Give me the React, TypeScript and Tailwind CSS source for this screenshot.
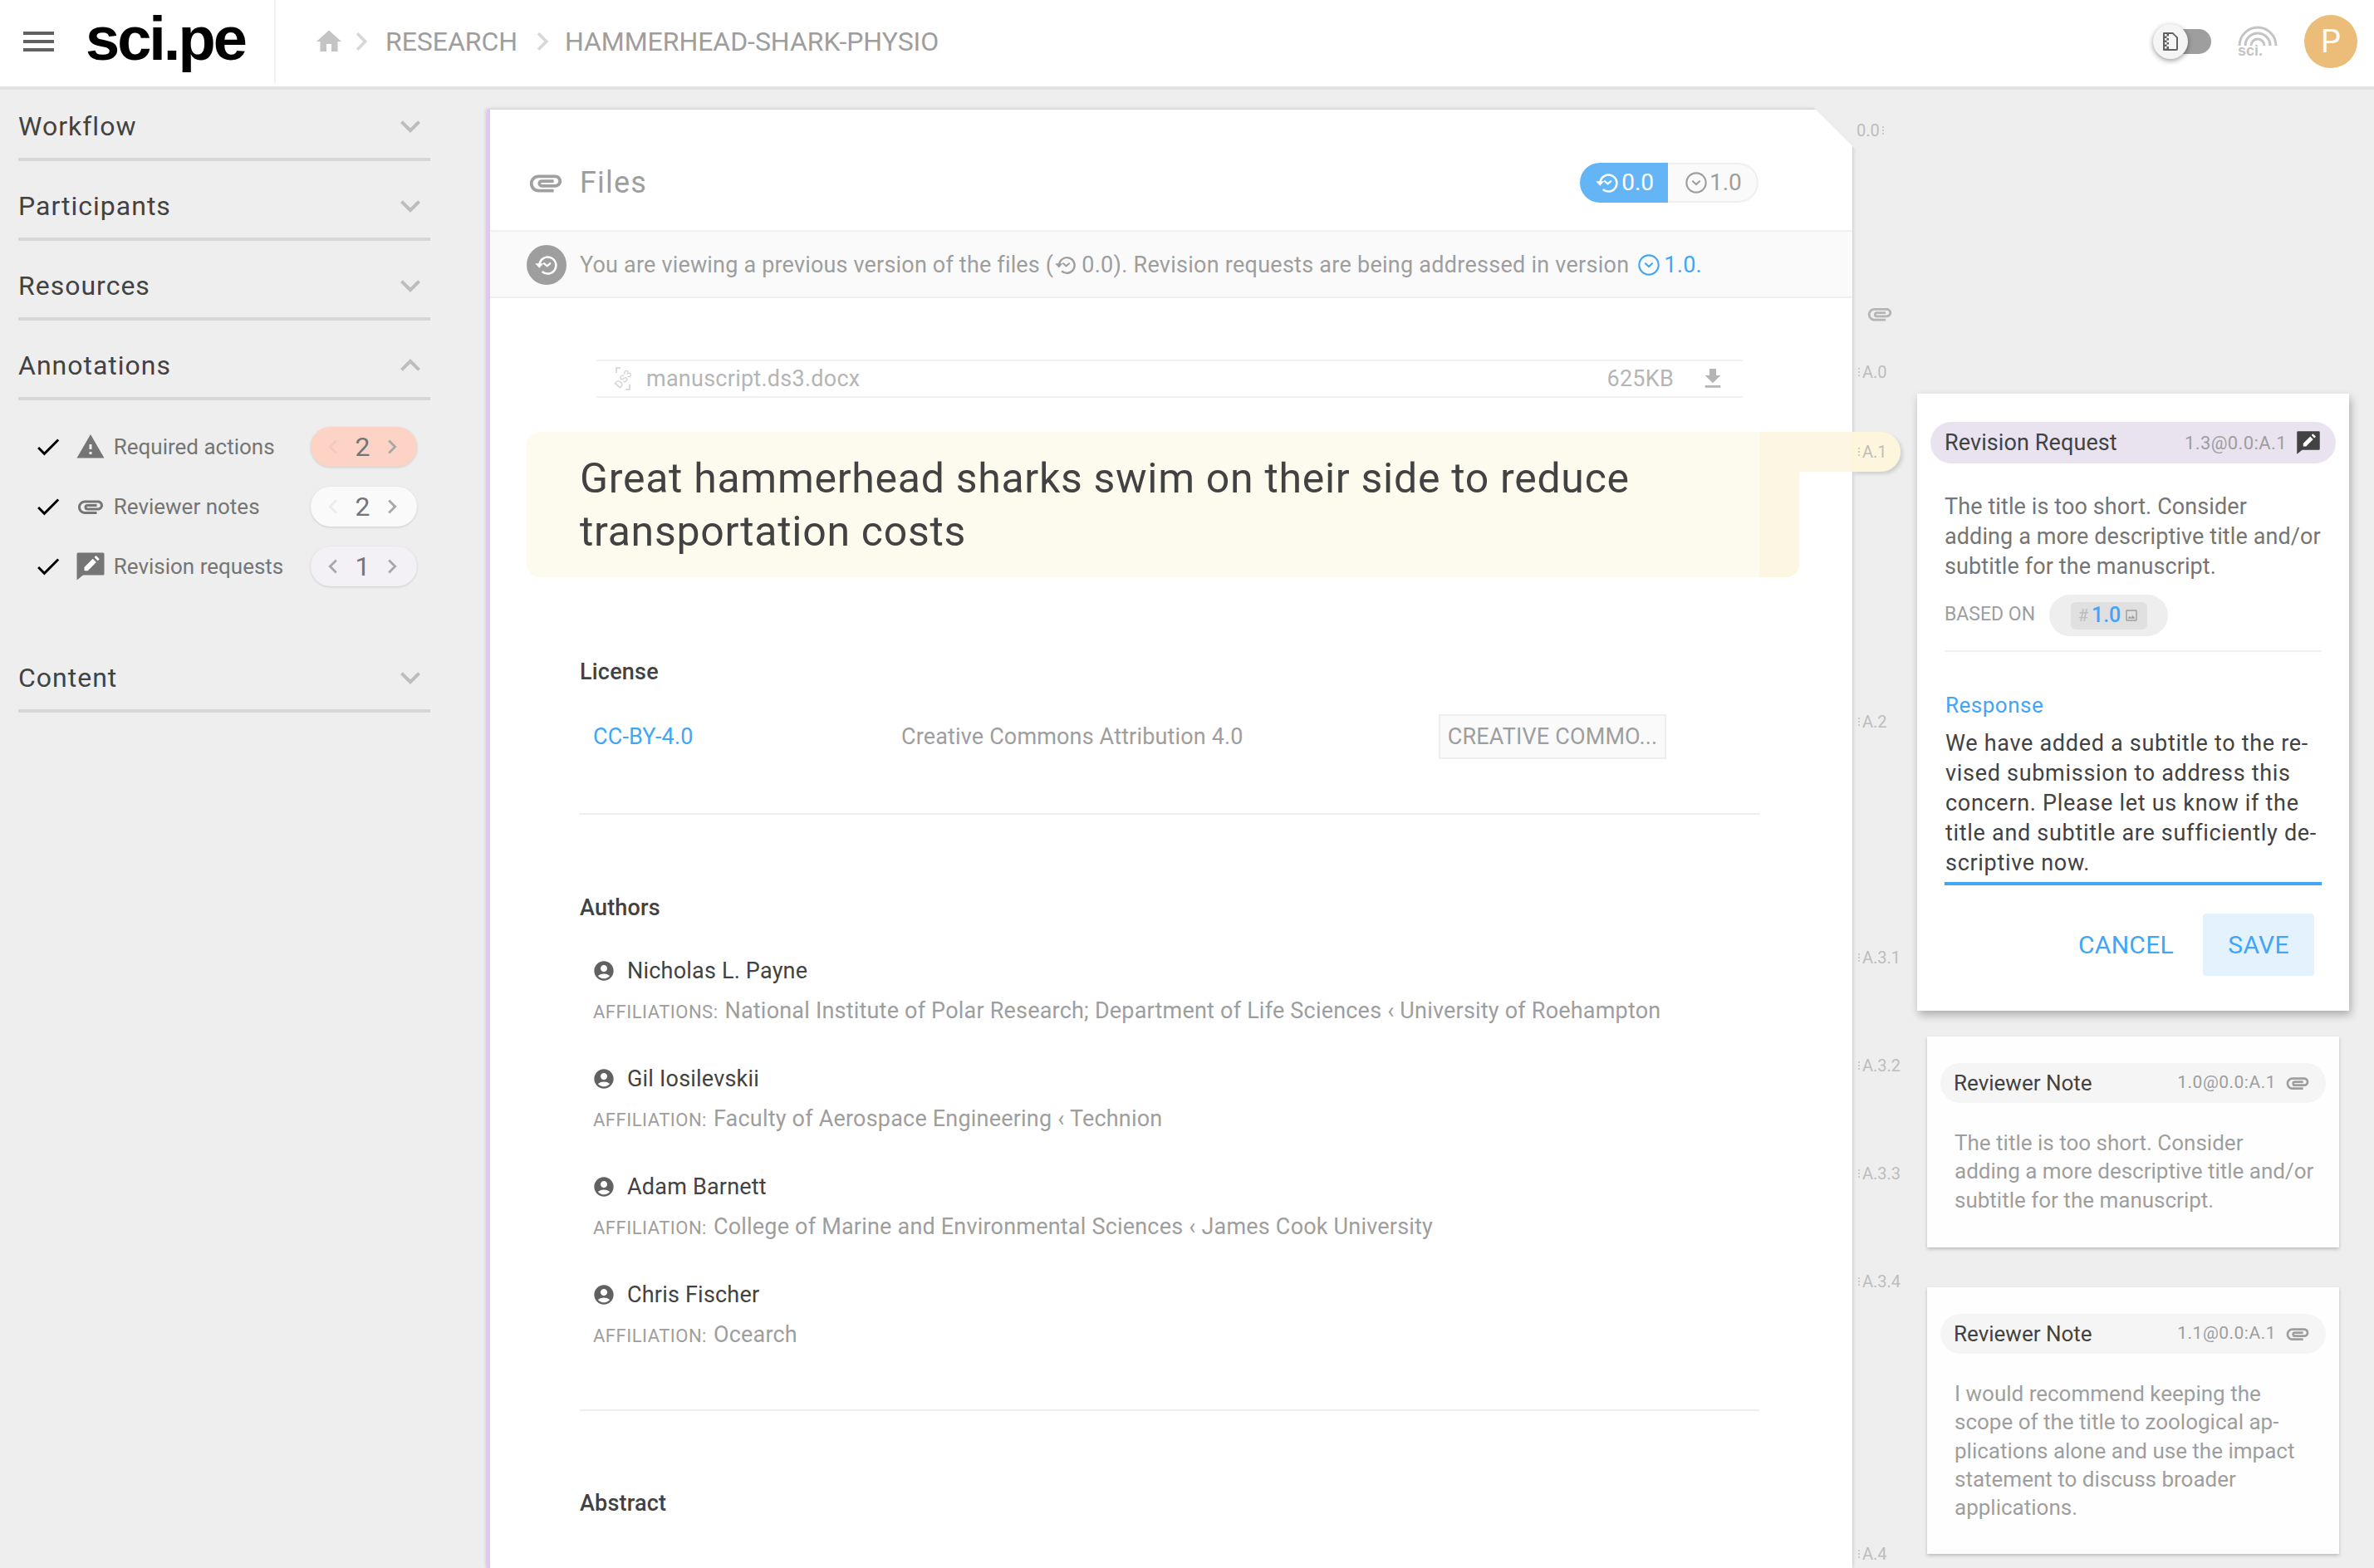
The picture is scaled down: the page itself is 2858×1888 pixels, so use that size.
import {
  MdAccountCircle,
  MdAttachment,
  MdCheck,
  MdChevronLeft,
  MdChevronRight,
  MdFileDownload,
  MdHome,
  MdKeyboardArrowDown,
  MdKeyboardArrowUp,
  MdOutlineImage,
  MdWarning,
} from 'react-icons/md';

function HistoryIcon({ className }: { className?: string }) {
  return (
    <svg className={className} fill="none" stroke="currentColor" viewBox="0 0 24 24">
      <path d="M5.2 11.5a8 8 0 1 1 2.6 6.9" strokeWidth="2" />
      <path d="M1 10.5h8l-4 4.5z" fill="currentColor" stroke="none" />
      <path d="M9.5 10.5l3 2.6 3-2.6" strokeLinecap="round" strokeWidth="1.8" />
    </svg>
  );
}

function CircleChevron({ className }: { className?: string }) {
  return (
    <svg className={className} fill="none" stroke="currentColor" viewBox="0 0 24 24">
      <circle cx="12" cy="12" r="10" strokeWidth="1.8" />
      <path d="M8.5 10.5l3.5 3.2 3.5-3.2" strokeLinecap="round" strokeWidth="1.8" />
    </svg>
  );
}

function RevisionIcon({ className }: { className?: string }) {
  return (
    <svg className={className} viewBox="0 0 24 24">
      <path d="M2 1h20a1 1 0 0 1 1 1v16a1 1 0 0 1-1 1H6l-5 4V2a1 1 0 0 1 1-1z" fill="currentColor" />
      <path d="M7 15.500v-2.800l6.800-6.800 2.800 2.800-6.800 6.800zM15 4.700l1.400-1.400 2.800 2.800-1.400 1.400z" fill="#ffffff" />
    </svg>
  );
}

function ZipIcon() {
  return (
    <svg className="h-[24px] w-[20px]" viewBox="0 0 20 24">
      <path d="M2 1h11l6 6v14a2 2 0 0 1-2 2H2a1 1 0 0 1-1-1V2a1 1 0 0 1 1-1z" fill="#616161" />
      <path d="M8 3h4.500L17 7.500V21H8z" fill="#f5f5f5" />
      <path
        d="M3 3h2.500v2.500H3zM5.500 5.500H8V8H5.500zM3 8h2.500v2.500H3zM5.500 10.500H8V13H5.500zM3 13h2.500v2.500H3zM5.500 15.500H8V18H5.500zM3 18h2.500v2.500H3z"
        fill="#f5f5f5"
      />
    </svg>
  );
}

function Ds3Icon() {
  return (
    <svg className="h-[30px] w-[30px]" fill="none" viewBox="0 0 30 30">
      <path d="M7 8V2h5M23 22v6h-5" stroke="#cfcfcf" strokeWidth="1.5" />
      <text
        fill="#cfcfcf"
        fontFamily="Roboto, sans-serif"
        fontSize="13"
        textAnchor="middle"
        transform="rotate(-50 15 15)"
        x="15"
        y="20"
      >
        DS3
      </text>
    </svg>
  );
}

function SidebarTitle({ title, open }: { title: string; open?: boolean }) {
  return (
    <div className="mb-[24px] border-b-4 border-[#d6d6d6] pb-[8px]">
      <div className="flex h-[60px] items-center justify-between">
        <span className="text-[32px] tracking-[1px] text-[#424242]">{title}</span>
        {open ? (
          <MdKeyboardArrowUp className="text-[#bdbdbd]" size={48} />
        ) : (
          <MdKeyboardArrowDown className="text-[#bdbdbd]" size={48} />
        )}
      </div>
    </div>
  );
}

function AnnotationRow({
  icon,
  label,
  count,
  pill,
  prevClass,
}: {
  icon: React.ReactNode;
  label: string;
  count: number;
  pill: string;
  prevClass: string;
}) {
  return (
    <div className="flex h-[48px] items-center">
      <MdCheck className="ml-[18px] text-black" size={36} />
      <span className="ml-[15px] flex w-[36px] justify-center text-[#757575]">{icon}</span>
      <span className="ml-[10px] w-[239px] whitespace-nowrap text-[26px] text-[#757575]">{label}</span>
      <div className={`flex h-[48px] w-[128px] shrink-0 items-center justify-between rounded-full pl-[10px] pr-[13px] shadow-[0_1px_3px_rgba(0,0,0,0.14)] ${pill}`}>
        <MdChevronLeft className={prevClass} size={34} />
        <span className="text-[32px] text-[#757575]">{count}</span>
        <MdChevronRight className="text-[#a8a8a8]" size={34} />
      </div>
    </div>
  );
}

function Author({ name, label, affiliation }: { name: string; label: string; affiliation: string }) {
  return (
    <div className="h-[130px] pl-[15px]">
      <div className="flex h-[36px] items-center">
        <MdAccountCircle className="text-[#616161]" size={28} />
        <span className="ml-[14px] text-[27px] tracking-[0.2px] text-[#424242]">{name}</span>
      </div>
      <div className="ml-[1px] mt-[10px] flex h-[36px] items-baseline whitespace-nowrap text-[27px] tracking-[0.2px] text-[#9e9e9e]">
        <span className="mr-[8px] text-[22px] tracking-[0.5px]">{label}</span>
        {affiliation}
      </div>
    </div>
  );
}

const MARKERS = [
  { label: '0.0', className: 'mt-[37px] pl-[5px]', trailing: true },
  { label: 'clip', className: 'mt-[197px] pl-[16px]' },
  { label: 'A.0', className: 'mt-[46px] pl-[4px]' },
  { label: 'A.1', className: 'mt-[72px] pl-[4px]' },
  { label: 'A.2', className: 'mt-[301px] pl-[4px]' },
  { label: 'A.3.1', className: 'mt-[260px] pl-[4px]' },
  { label: 'A.3.2', className: 'mt-[106px] pl-[4px]' },
  { label: 'A.3.3', className: 'mt-[106px] pl-[4px]' },
  { label: 'A.3.4', className: 'mt-[106px] pl-[4px]' },
  { label: 'A.4', className: 'mt-[304px] pl-[4px]' },
];

function Dots() {
  return (
    <span className="flex w-[8px] flex-col items-center gap-[2px]">
      <span className="h-[2px] w-[2px] rounded-full bg-[#bdbdbd]" />
      <span className="h-[2px] w-[2px] rounded-full bg-[#bdbdbd]" />
      <span className="h-[2px] w-[2px] rounded-full bg-[#bdbdbd]" />
    </span>
  );
}

function Heading({ className, children }: { className: string; children: string }) {
  return (
    <h2 className={`flex h-[36px] items-center text-[27px] font-medium tracking-[0.2px] text-[#424242] ${className}`}>
      {children}
    </h2>
  );
}

function NoteCard({
  id,
  lines,
  className,
}: {
  id: string;
  lines: string[];
  className: string;
}) {
  return (
    <div className={`ml-[12px] w-[496px] bg-[#fefefe] pt-[32px] shadow-[0_2px_4px_rgba(0,0,0,0.22)] ${className}`}>
      <div className="mx-[16px] flex h-[48px] items-center justify-between rounded-full bg-[#f5f5f5] pl-[16px] pr-[18px]">
        <span className="text-[26px] text-[#424242]">Reviewer Note</span>
        <div className="flex items-center gap-[10px]">
          <span className="text-[21px] tracking-[0.5px] text-[#9e9e9e]">{id}</span>
          <MdAttachment className="text-[#9e9e9e]" size={32} />
        </div>
      </div>
      <div className="mt-[31px] whitespace-nowrap pl-[33px] text-[26px] leading-[34.3px] text-[#9e9e9e]">
        {lines.map((line) => (
          <div key={line}>{line}</div>
        ))}
      </div>
    </div>
  );
}

export default function App() {
  return (
    <div className="flex h-[1888px] w-[2858px] flex-col overflow-hidden bg-[#eeeeee] font-['Roboto',sans-serif]">
      <header className="flex h-[108px] shrink-0 items-center border-b-4 border-[#e2e2e2] bg-white pb-[4px]">
        <div className="flex h-full w-[332px] items-center border-r-2 border-[#f0f0f0] pl-[28px]">
          <div className="flex h-[24px] w-[37px] flex-col justify-between">
            <div className="h-[4px] bg-[#616161]" />
            <div className="h-[4px] bg-[#616161]" />
            <div className="h-[4px] bg-[#616161]" />
          </div>
          <span className="mb-[6px] ml-[38px] font-['Liberation_Sans',sans-serif] text-[74px] font-bold leading-none tracking-[-3px] text-black">
            sci.pe
          </span>
        </div>
        <MdHome className="ml-[46px] text-[#c4c4c4]" size={36} />
        <MdChevronRight className="ml-[-1px] text-[#d8d8d8]" size={44} />
        <span className="ml-[7px] text-[32px] tracking-[-0.05px] text-[#9e9e9e]">RESEARCH</span>
        <MdChevronRight className="ml-[8px] text-[#d8d8d8]" size={44} />
        <span className="ml-[5px] text-[32px] tracking-[-0.05px] text-[#9e9e9e]">HAMMERHEAD-SHARK-PHYSIO</span>
        <div className="ml-auto flex items-center">
          <div className="relative mr-[32px] h-[30px] w-[64px] rounded-full bg-[#9e9e9e]">
            <div className="absolute left-[-6px] top-[-6px] flex h-[42px] w-[42px] items-center justify-center rounded-full bg-[#f5f5f5] shadow-[0_2px_6px_rgba(0,0,0,0.4)]">
              <ZipIcon />
            </div>
          </div>
          <div className="mr-[32px] flex w-[48px] flex-col items-start">
            <svg className="h-[26px] w-[48px]" fill="none" stroke="#c4c4c4" strokeWidth="3" viewBox="0 0 48 26">
              <path d="M2 25a22 22 0 0 1 44 0M9 25a15 15 0 0 1 30 0M16 25a8 8 0 0 1 16 0" />
            </svg>
            <span className="mt-[-4px] font-['Liberation_Sans',sans-serif] text-[18px] font-bold leading-[18px] text-[#c4c4c4]">
              sci.
            </span>
          </div>
          <div className="mr-[20px] flex h-[64px] w-[64px] items-center justify-center rounded-full bg-[#ecbd78] text-[38px] text-white">
            P
          </div>
        </div>
      </header>

      <div className="flex min-h-0 flex-1">
        <aside className="w-[586px] shrink-0 pt-[14px]">
          <div className="ml-[22px] w-[496px]">
            <SidebarTitle title="Workflow" />
            <SidebarTitle title="Participants" />
            <SidebarTitle title="Resources" />
            <SidebarTitle open title="Annotations" />
          </div>
          <div className="ml-[22px] mt-[32px] flex w-[480px] flex-col gap-[24px]">
            <AnnotationRow
              count={2}
              icon={<MdWarning size={38} />}
              label="Required actions"
              pill="bg-[#fdd3c6]"
              prevClass="text-[#f5c8ba]"
            />
            <AnnotationRow
              count={2}
              icon={<MdAttachment size={42} />}
              label="Reviewer notes"
              pill="bg-[#fafafa]"
              prevClass="text-[#ececec]"
            />
            <AnnotationRow
              count={1}
              icon={<RevisionIcon className="h-[36px] w-[36px]" />}
              label="Revision requests"
              pill="bg-[#f3f0f6]"
              prevClass="text-[#a8a8a8]"
            />
          </div>
          <div className="ml-[22px] mt-[80px] w-[496px]">
            <SidebarTitle title="Content" />
          </div>
        </aside>

        <main className="relative mt-[24px] w-[1644px] shrink-0 border-l-4 border-[#e1c8f0] bg-white shadow-[0_0_5px_rgba(0,0,0,0.22)]">
          <div className="absolute right-[-6px] top-[-6px] h-[56px] w-[56px] bg-[#eeeeee] [clip-path:polygon(0_0,100%_0,100%_100%)]" />

          <div className="flex h-[145px] items-center pl-[44px] pr-[113px] pt-[30px]">
            <MdAttachment className="text-[#a0a0a0]" size={46} />
            <span className="ml-[18px] text-[36px] tracking-[1.2px] text-[#9e9e9e]">Files</span>
            <div className="ml-auto flex h-[48px] w-[215px] overflow-hidden rounded-full">
              <div className="flex w-[106px] items-center justify-end gap-[2px] bg-[#64b5f6] pr-[17px] text-[28px] text-white">
                <HistoryIcon className="h-[30px] w-[30px]" />
                0.0
              </div>
              <div className="flex flex-1 items-center gap-[2px] rounded-r-full border-2 border-l-0 border-[#eeeeee] bg-[#fafafa] pl-[20px] text-[28px] text-[#9e9e9e]">
                <CircleChevron className="h-[28px] w-[28px]" />
                1.0
              </div>
            </div>
          </div>

          <div className="flex h-[82px] items-center whitespace-nowrap border-y-2 border-[#f0f0f0] bg-[#fafafa] pl-[44px] pt-[2px] text-[27px] tracking-[0.26px] text-[#9e9e9e]">
            <div className="mr-[16px] flex h-[48px] w-[48px] items-center justify-center rounded-full bg-[#9e9e9e] text-white">
              <HistoryIcon className="h-[30px] w-[30px]" />
            </div>
            <span className="tracking-[0.18px]">You are viewing a previous version of the files (</span>
            <HistoryIcon className="ml-[1px] h-[28px] w-[28px]" />
            <span className="ml-[5px]">0.0). Revision requests are being addressed in version</span>
            <CircleChevron className="ml-[10px] h-[28px] w-[28px] text-[#42a5f5]" />
            <span className="ml-[4px] text-[#42a5f5]">1.0.</span>
          </div>

          <div className="ml-[128px] mr-[132px] mt-[74px] flex h-[46px] items-center border-y-2 border-[#f0f0f0] pl-[17px] pr-[20px] text-[27px] tracking-[0.25px] text-[#b5b5b5]">
            <Ds3Icon />
            <span className="ml-[13px]">manuscript.ds3.docx</span>
            <span className="ml-auto">625KB</span>
            <MdFileDownload className="ml-[31px] text-[#b5b5b5]" size={32} />
          </div>

          <div className="relative ml-[44px] mr-[64px] mt-[41px] h-[175px] rounded-[16px] bg-[#fdfaee] pl-[64px] pt-[24px] text-[50px] leading-[64px] tracking-[0.7px] text-[#424242]">
            <div className="absolute bottom-0 right-0 top-0 w-[48px] rounded-br-[16px] bg-[#fcf6e2]" />
            <div className="absolute left-full top-0 h-[48px] w-[64px] bg-[#fcf6e2]" />
            <div className="absolute left-[1596px] top-0 h-[48px] w-[58px] rounded-r-full bg-[#fdf6dc] shadow-[3px_3px_4px_rgba(0,0,0,0.12)]" />
            <div className="relative whitespace-nowrap">
              Great hammerhead sharks swim on their side to reduce
              <br />
              transportation costs
            </div>
          </div>

          <div className="ml-[108px] mr-[112px]">
            <Heading className="mt-[96px]">License</Heading>
            <div className="mt-[33px] flex h-[54px] items-center pl-[16px] text-[27px] tracking-[0.15px]">
              <span className="w-[371px] text-[#42a5f5]">CC-BY-4.0</span>
              <span className="w-[647px] text-[#9e9e9e]">Creative Commons Attribution 4.0</span>
              <span className="flex h-[54px] w-[274px] items-center justify-center whitespace-nowrap border-2 border-[#eeeeee] bg-[#fafafa] text-[#9e9e9e]">
                CREATIVE COMMO...
              </span>
            </div>
            <div className="mt-[65px] h-[2px] bg-[#eeeeee]" />
            <Heading className="mt-[94px]">Authors</Heading>
            <div className="mt-[40px]">
              <Author
                affiliation="National Institute of Polar Research; Department of Life Sciences ‹ University of Roehampton"
                label="AFFILIATIONS:"
                name="Nicholas L. Payne"
              />
              <Author
                affiliation="Faculty of Aerospace Engineering ‹ Technion"
                label="AFFILIATION:"
                name="Gil Iosilevskii"
              />
              <Author
                affiliation="College of Marine and Environmental Sciences ‹ James Cook University"
                label="AFFILIATION:"
                name="Adam Barnett"
              />
              <Author affiliation="Ocearch" label="AFFILIATION:" name="Chris Fischer" />
            </div>
            <div className="mt-[26px] h-[2px] bg-[#eeeeee]" />
            <Heading className="mt-[93px]">Abstract</Heading>
          </div>
        </main>

        <div className="relative z-10 flex w-[78px] shrink-0 flex-col">
          {MARKERS.map((marker) => (
            <div className={`flex h-[24px] items-center text-[20px] text-[#bdbdbd] ${marker.className}`} key={marker.label}>
              {marker.label === 'clip' ? (
                <MdAttachment className="text-[#b5b5b5]" size={34} />
              ) : marker.trailing ? (
                <>
                  {marker.label}
                  <Dots />
                </>
              ) : (
                <>
                  <Dots />
                  {marker.label}
                </>
              )}
            </div>
          ))}
        </div>

        <div className="relative z-10 flex w-[520px] shrink-0 flex-col">
          <div className="mt-[366px] h-[743px] w-[520px] bg-white pt-[34px] shadow-[2px_5px_10px_rgba(0,0,0,0.28)]">
            <div className="mx-[16px] flex h-[50px] items-center justify-between rounded-full bg-[#e9e3ef] pl-[17px] pr-[18px]">
              <span className="text-[27px] tracking-[0.1px] text-[#424242]">Revision Request</span>
              <div className="flex items-center gap-[11px]">
                <span className="text-[22px] tracking-[0.4px] text-[#9e9e9e]">1.3@0.0:A.1</span>
                <RevisionIcon className="h-[30px] w-[30px] text-[#424242]" />
              </div>
            </div>
            <div className="ml-[33px] mt-[34px] whitespace-nowrap text-[27px] leading-[36px] tracking-[0.1px] text-[#757575]">
              The title is too short. Consider
              <br />
              adding a more descriptive title and/or
              <br />
              subtitle for the manuscript.
            </div>
            <div className="ml-[33px] mt-[16px] flex h-[50px] items-center">
              <span className="mb-[2px] w-[126px] text-[23px] text-[#9e9e9e]">BASED ON</span>
              <div className="flex h-[50px] w-[143px] items-center justify-center rounded-full bg-[#eeeeee]">
                <div className="flex h-[33px] w-[92px] items-center justify-center gap-[4px] rounded-[6px] bg-[#e0e0e0] text-[25px] font-medium text-[#42a5f5]">
                  <span className="text-[20px] font-normal text-[#bdbdbd]">#</span>
                  1.0
                  <MdOutlineImage className="text-[#9e9e9e]" size={18} />
                </div>
              </div>
            </div>
            <div className="mx-[33px] mt-[17px] h-[2px] bg-[#f2f2f2]" />
            <div className="ml-[34px] mt-[46px] flex h-[36px] items-center text-[26px] tracking-[0.5px] text-[#42a5f5]">
              Response
            </div>
            <div className="ml-[34px] mt-[10px] whitespace-nowrap text-[27px] leading-[36px] tracking-[0.7px] text-[#424242]">
              We have added a subtitle to the re-
              <br />
              vised submission to address this
              <br />
              concern. Please let us know if the
              <br />
              title and subtitle are sufficiently de-
              <br />
              scriptive now.
            </div>
            <div className="mx-[33px] mt-[5px] h-[4px] bg-[#42a5f5]" />
            <div className="mr-[42px] mt-[34px] flex items-center justify-end text-[30px] tracking-[0.3px] text-[#42a5f5]">
              <span>CANCEL</span>
              <span className="ml-[35px] flex h-[75px] w-[134px] items-center justify-center rounded-[4px] bg-[#e3f2fd]">
                SAVE
              </span>
            </div>
          </div>

          <NoteCard
            className="mt-[31px] h-[254px]"
            id="1.0@0.0:A.1"
            lines={[
              'The title is too short. Consider',
              'adding a more descriptive title and/or',
              'subtitle for the manuscript.',
            ]}
          />
          <NoteCard
            className="mt-[48px] h-[321px]"
            id="1.1@0.0:A.1"
            lines={[
              'I would recommend keeping the',
              'scope of the title to zoological ap-',
              'plications alone and use the impact',
              'statement to discuss broader',
              'applications.',
            ]}
          />
        </div>
      </div>
    </div>
  );
}
